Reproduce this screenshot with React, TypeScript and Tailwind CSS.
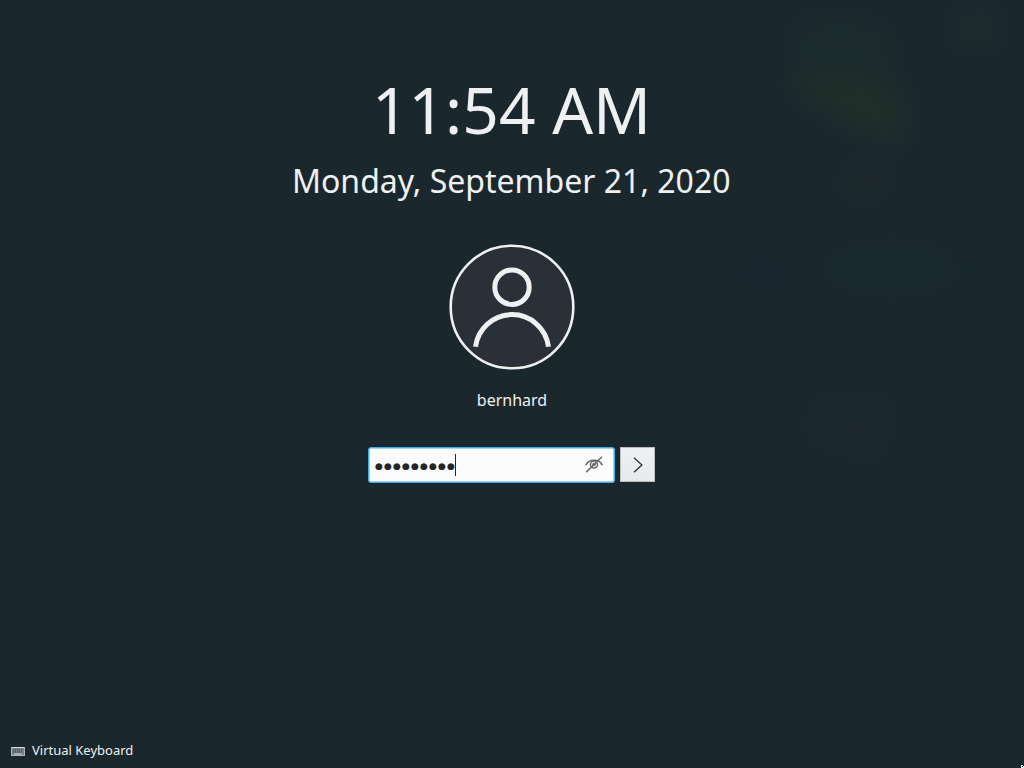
import React from "react";

const Backdrop = () => (
  <svg className="absolute inset-0 h-full w-full" viewBox="0 0 1024 768" aria-hidden="true">
    <defs>
      <filter id="soft" x="-50%" y="-50%" width="200%" height="200%" colorInterpolationFilters="sRGB">
        <feGaussianBlur stdDeviation="13" />
      </filter>
    </defs>
    <g filter="url(#soft)">
      <path d="M790 20 L885 20 L908 145 L845 125 L800 98 Z" fill="#1c2b2c" />
      <path d="M785 78 L860 76 L904 96 L900 146 L845 124 Z" fill="#202f29" />
      <circle cx="976" cy="28" r="20" fill="#1e2d2a" />
      <ellipse cx="762" cy="275" rx="28" ry="24" fill="#19262f" />
      <path d="M845 160 L895 165 L880 205 L840 200 Z" fill="#1d282c" />
      <ellipse cx="890" cy="268" rx="70" ry="24" fill="#1a2a2e" />
      <path d="M815 390 L900 400 L880 470 L800 440 Z" fill="#1c282d" />
    </g>
  </svg>
);

const Avatar = () => (
  <svg className="block h-[126px] w-[126px]" viewBox="0 0 126 126" fill="none" aria-hidden="true">
    <circle cx="63" cy="63" r="61.3" fill="#293037" stroke="#eff0f1" strokeWidth="2.6" />
    <circle cx="63" cy="43.2" r="17.2" stroke="#eff0f1" strokeWidth="5" />
    <path d="M26.5 102.7a36.8 36.8 0 0 1 73 0" stroke="#eff0f1" strokeWidth="5" />
  </svg>
);

const HiddenEye = () => (
  <svg className="block h-[18px] w-5" viewBox="0 0 20 18" fill="none" stroke="#686b6c" aria-hidden="true">
    <path d="M1.8 9.2C5.2 2.6 15.2 2.6 18.3 9.2" strokeWidth="1.7" />
    <circle cx="10" cy="8.5" r="3.5" strokeWidth="1.5" />
    <circle cx="10" cy="8.5" r="1.8" fill="#686b6c" stroke="none" />
    <path d="M2.2 16.3 18 .7" strokeWidth="1.6" />
  </svg>
);

const KeyboardIcon = () => (
  <svg className="block h-[9px] w-[14px]" viewBox="0 0 14 9" fill="none" aria-hidden="true">
    <path d="M0 0h14v9H0z" fill="#788184" />
    <path d="M0 .5h14" stroke="#d8dbdc" />
    <path d="M.5 0v9M13.5 0v9M0 8.5h14" stroke="#aeb3b5" />
    <path d="M2 3h10M2 5h10" stroke="#263238" strokeWidth="1" strokeDasharray="1 1" />
    <path d="M3 7h8" stroke="#d3d7d8" />
  </svg>
);

export default function App() {
  return (
    <main className="relative flex h-[768px] w-[1024px] flex-col items-center overflow-hidden bg-[#1a282e] pt-[66px] font-['Noto_Sans',sans-serif] text-[#eff0f1]">
      <Backdrop />
      <time className="relative h-[87px] pr-px text-[64px] leading-[87px] whitespace-nowrap">11:54 AM</time>
      <div className="relative mt-[6px] h-[44px] pr-[1.5px] text-[32px] leading-[44px] whitespace-nowrap">Monday, September 21, 2020</div>
      <div className="relative mt-[41px]">
        <Avatar />
      </div>
      <div className="relative mt-[19px] h-[22px] text-[16px] leading-[22px]">bernhard</div>
      <form className="relative mt-[36px] flex w-[288px] items-start gap-[5px]">
        <div className="flex h-9 w-[247px] items-center rounded-[3px] border border-[#3daee9] bg-[#fcfcfc] pr-[10px] pl-[6px] inset-ring inset-ring-[#3daee9]/50">
          <span className="pt-[3px] font-['DejaVu_Sans',sans-serif] text-[9px] leading-none tracking-[1.14px] text-[#232629]">●●●●●●●●●</span>
          <span className="-ml-[0.5px] h-[22px] w-px bg-[#232629]" />
          <span className="ml-auto">
            <HiddenEye />
          </span>
        </div>
        <button type="button" aria-label="Log in" className="flex h-[35px] w-[35px] items-center justify-center border border-[#bcbebf] bg-linear-to-b from-[#eff0f1] to-[#e8e9ea]">
          <svg className="block h-4 w-[10px]" viewBox="0 0 10 16" fill="none" aria-hidden="true">
            <path d="M1 .8 9 8 1 15.2" stroke="#232629" strokeWidth="1.15" />
          </svg>
        </button>
      </form>
      <footer className="relative mt-auto mb-[9px] flex items-center gap-[7px] self-start pl-[11px] text-[13px] leading-[18px]">
        <span className="pt-[2px]">
          <KeyboardIcon />
        </span>
        <span>Virtual Keyboard</span>
      </footer>
      <svg className="absolute right-0 bottom-0 h-[3px] w-[3px]" viewBox="0 0 3 3" aria-hidden="true">
        <path d="M0 0h2v1h1v2H0z" fill="#eff0f1" />
        <path d="M1 1h1v1H1z" fill="#232629" />
      </svg>
    </main>
  );
}
